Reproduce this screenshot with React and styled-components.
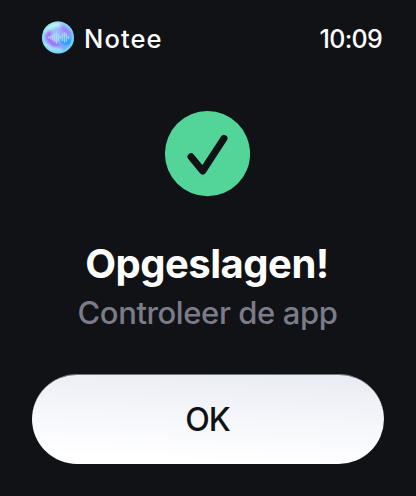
import React from "react";
import styled, { createGlobalStyle } from "styled-components";

const GlobalStyle = createGlobalStyle`
* {
  box-sizing: border-box;
}
body {
  margin: 0;
  background: #111216;
}
`

const Screen = styled.main`
display: flex;
flex-direction: column;
width: 416px;
height: 496px;
padding: 0 32px;
background: #111216;
color: #fff;
font-family: Inter, "Liberation Sans", sans-serif;
`
const StatusBar = styled.header`
display: flex;
align-items: center;
height: 76px;
padding: 0 2px 0 9px;
`
const Logo = styled.svg`
width: 34px;
height: 34px;
margin-right: 9px;
`
const AppName = styled.span`
font-size: 25.5px;
font-weight: 550;
letter-spacing: 1.1px;
`
const Clock = styled.time`
margin-left: auto;
padding-top: 2px;
font-size: 25px;
font-weight: 500;
letter-spacing: -0.7px;
`
const SuccessIcon = styled.svg`
width: 86px;
height: 86px;
margin: 35px 0 0 132px;
`
const Message = styled.section`
display: flex;
flex-direction: column;
align-items: center;
margin-top: 42px;
white-space: nowrap;
`
const Title = styled.h1`
margin: 0 2px 0 0;
font-size: 40px;
line-height: 50px;
font-weight: 700;
letter-spacing: -0.5px;
`
const Subtitle = styled.p`
margin: 4px 1px 0 0;
color: #7c7b89;
font-size: 31px;
line-height: 40px;
font-weight: 500;
letter-spacing: -0.4px;
`
const Button = styled.button`
width: 352px;
height: 90px;
margin-top: 41px;
padding: 0 1px 0 0;
border: 0;
border-top: 1px solid #77787b;
border-radius: 45px;
background: linear-gradient(183deg, #e8ebf2 0%, #f6f7fb 50%, #fff 90%);
color: #111216;
font-family: inherit;
font-size: 32px;
font-weight: 500;
letter-spacing: -1px;
`

const bars = [
  [7.5, 1], [9.5, 2], [11.5, 4], [13.5, 7], [15.5, 11], [17.5, 6], [19.5, 2],
  [21.5, 6], [23.5, 9], [25.5, 7], [27.5, 2],
]

function NoteeLogo() {
  return (
    <Logo viewBox="0 0 34 34" aria-hidden="true">
      <defs>
        <linearGradient id="orb" x1="0" y1="0" x2="1" y2="1">
          <stop offset="0" stopColor="#8deaf2" />
          <stop offset="0.45" stopColor="#9cb4fa" />
          <stop offset="0.7" stopColor="#62adf7" />
          <stop offset="1" stopColor="#60edf0" />
        </linearGradient>
        <radialGradient id="rim">
          <stop offset="0.8" stopColor="#79eff5" stopOpacity="0" />
          <stop offset="1" stopColor="#79e4ef" stopOpacity="0.8" />
        </radialGradient>
        <clipPath id="circle"><circle cx="17" cy="16.5" r="16" /></clipPath>
        <filter id="soft" x="-50%" y="-50%" width="200%" height="200%">
          <feGaussianBlur stdDeviation="1.4" />
        </filter>
      </defs>
      <g clipPath="url(#circle)">
        <rect width="34" height="34" fill="url(#orb)" />
        <g filter="url(#soft)">
          <path d="M3 11Q8 3 19 3" stroke="#c4f3f4" strokeWidth="5" fill="none" />
          <path d="M9 10C5 15 8 25 18 24" stroke="#a866f8" strokeWidth="4.5" fill="none" />
          <path d="M20 7Q26 8 28 15" stroke="#a77bf8" strokeWidth="4" fill="none" />
          <ellipse cx="25" cy="20" rx="5" ry="4.5" fill="#279cf5" />
          <path d="M3 22Q9 30 21 29" stroke="#a4f0fa" strokeWidth="3.5" fill="none" />
          <ellipse cx="23" cy="27" rx="4" ry="2" fill="#8fa4ff" />
        </g>
        <circle cx="17" cy="16.5" r="16" fill="url(#rim)" />
        <g stroke="#b8e6ff" strokeWidth="1.5" strokeLinecap="round" opacity="0.7">
          {bars.map(([x, h]) => (
            <line key={x} x1={x} x2={x} y1={16.5 - h / 2} y2={16.5 + h / 2} />
          ))}
        </g>
      </g>
    </Logo>
  )
}

export default function App() {
  return (
    <>
      <GlobalStyle />
      <Screen>
        <StatusBar>
          <NoteeLogo />
          <AppName>Notee</AppName>
          <Clock>10:09</Clock>
        </StatusBar>
        <SuccessIcon viewBox="0 0 86 86" aria-hidden="true">
          <circle cx="43.5" cy="42.7" r="42.6" fill="#53d59a" />
          <path
            d="M27 45.7L38.7 60L60 27.4"
            fill="none"
            stroke="#111216"
            strokeWidth="7"
            strokeLinecap="round"
            strokeLinejoin="round"
          />
        </SuccessIcon>
        <Message>
          <Title>Opgeslagen!</Title>
          <Subtitle>Controleer de app</Subtitle>
        </Message>
        <Button type="button">OK</Button>
      </Screen>
    </>
  )
}
